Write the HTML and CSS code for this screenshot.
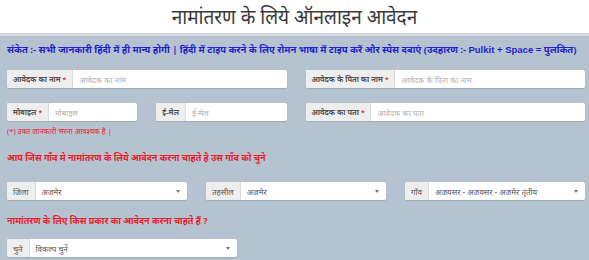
FILE: index.html
```html
<!DOCTYPE html>
<html lang="hi">
<head>
<meta charset="utf-8">
<link rel="stylesheet" href="styles.css">
</head>
<body>
<header class="top">
  <h1 class="title">नामांतरण के लिये ऑनलाइन आवेदन</h1>
</header>
<main class="content">
  <p class="hint">संकेत :- सभी जानकारी हिंदी में ही मान्य होगी | हिंदी में टाइप करने के लिए रोमन भाषा में टाइप करें और स्पेस दबाएं (उदहारण :- <span class="latin">Pulkit + Space =</span> पुलकित)</p>

  <div class="row row-first">
    <div class="group span6"><span class="addon">आवेदक का नाम <i class="req">*</i></span><span class="field ph">आवेदक का नाम</span></div>
    <div class="group span6"><span class="addon">आवेदक के पिता का नाम <i class="req">*</i></span><span class="field ph">आवेदक के पिता का नाम</span></div>
  </div>

  <div class="row row-second">
    <div class="group span3"><span class="addon">मोबाइल <i class="req">*</i></span><span class="field ph">मोबाइल</span></div>
    <div class="group span3"><span class="addon">ई-मेल</span><span class="field ph">ई-मेल</span></div>
    <div class="group span6"><span class="addon">आवेदक का पता <i class="req">*</i></span><span class="field ph">आवेदक का पता</span></div>
  </div>
  <p class="required">(*) उक्त जानकारी भरना आवश्यक है |</p>

  <h2 class="section">आप जिस गाँव मे नामांतरण के लिये आवेदन करना चाहते है उस गाँव को चुने</h2>
  <div class="row">
    <div class="group span4"><span class="addon plain">जिला</span><span class="field select">अजमेर<span class="caret"></span></span></div>
    <div class="group span4"><span class="addon plain">तहसील</span><span class="field select">अजमेर<span class="caret"></span></span></div>
    <div class="group span4"><span class="addon plain">गाँव</span><span class="field select">अजयसर - अजयसर - अजमेर तृतीय<span class="caret"></span></span></div>
  </div>

  <h2 class="section second">नामांतरण के लिए किस प्रकार का आवेदन करना चाहते हैं ?</h2>
  <div class="row">
    <div class="group span5"><span class="addon plain">चुने</span><span class="field select">विकल्प चुनें<span class="caret"></span></span></div>
  </div>
</main>
</body>
</html>
```
FILE: styles.css
```css
* { box-sizing: border-box; }
html, body { margin: 0; padding: 0; }
body {
  background: #b5c3d0;
  font-family: "Noto Sans", "Noto Sans Devanagari", "Lohit Devanagari", "FreeSans", sans-serif;
  color: #555;
  width: 589px;
  height: 260px;
  overflow: hidden;
}
.top {
  background: #fff;
  height: 36px;
  border-bottom: 3px solid #d3dae1;
  display: flex;
  justify-content: center;
  align-items: center;
}
.title {
  margin: 0;
  font-size: 19px;
  font-weight: 400;
  color: #3a3a3a;
  line-height: 1;
  transform: scaleY(1.12);
}
.content {
  padding: 0 4px 0 7px;
}
.hint {
  margin: 0;
  padding-top: 7px;
  height: 27px;
  font-size: 9.5px;
  font-weight: 700;
  color: #1f1fcf;
  white-space: nowrap;
  line-height: 14px;
}
.latin { font-family: "Liberation Sans", Arial, sans-serif; }
.row {
  display: grid;
  grid-template-columns: repeat(12, 1fr);
  column-gap: 19px;
  height: 18px;
}
.row-first { margin-top: 7px; margin-bottom: 15px; }
.span3 { grid-column: span 3; }
.span4 { grid-column: span 4; }
.span5 { grid-column: span 5; }
.span6 { grid-column: span 6; }
.group {
  display: flex;
  height: 18px;
  border-radius: 2px;
  background: #fff;
  box-shadow: 0 1px 1px rgba(0,0,0,0.12);
  overflow: hidden;
}
.addon {
  background: #eeeeee;
  border-right: 1px solid #dcdcdc;
  padding: 0 6px;
  font-size: 7.5px;
  font-weight: 700;
  color: #555;
  display: flex;
  align-items: center;
  white-space: nowrap;
}
.addon.plain { font-weight: 400; font-size: 8px; }
.req { font-style: normal; color: #e03030; margin-left: 2px; font-size: 6.5px; }
.field {
  flex: 1;
  display: flex;
  align-items: center;
  padding: 0 6px;
  font-size: 8px;
  color: #555;
  white-space: nowrap;
  position: relative;
}
.field.ph { color: #b0b0b0; }
.caret {
  position: absolute;
  right: 7px;
  top: 8px;
  width: 0; height: 0;
  border-left: 2.5px solid transparent;
  border-right: 2.5px solid transparent;
  border-top: 3px solid #777;
}
.required {
  margin: 0;
  padding-top: 4px;
  height: 24px;
  font-size: 7.5px;
  color: #e8202a;
  line-height: 12px;
}
.section {
  margin: 0;
  font-size: 9px;
  font-weight: 700;
  color: #e8202a;
  line-height: 14px;
  height: 37px;
  padding-top: 6px;
}
.section.second {
  height: 39px;
  padding-top: 14px;
}
```
